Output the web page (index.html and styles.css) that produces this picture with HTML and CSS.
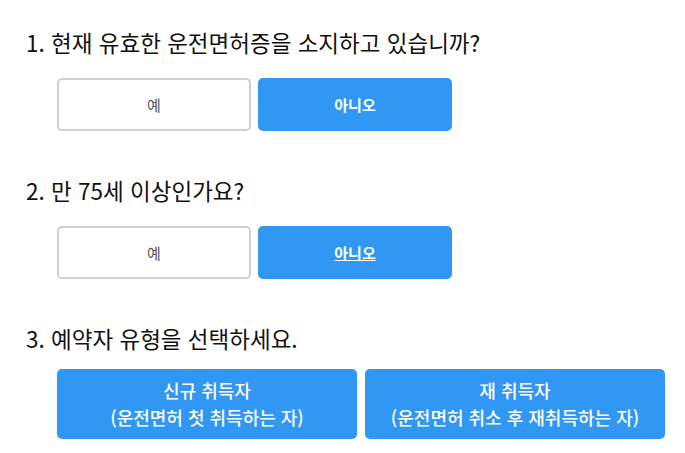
FILE: index.html
```html
<!DOCTYPE html>
<html lang="ko">
<head>
    <meta charset="UTF-8">
    <meta name="viewport" content="width=device-width, initial-scale=1.0">
    <title>예약 자격 확인</title>
    <link rel="stylesheet" href="styles.css">
</head>
<body>
    <div class="survey">
        <div class="question">
            <h2 class="question-title">1. 현재 유효한 운전면허증을 소지하고 있습니까?</h2>
            <div class="choice-row">
                <button class="choice-btn">예</button>
                <button class="choice-btn selected">아니오</button>
            </div>
        </div>

        <div class="question">
            <h2 class="question-title">2. 만 75세 이상인가요?</h2>
            <div class="choice-row">
                <button class="choice-btn">예</button>
                <button class="choice-btn selected focused">아니오</button>
            </div>
        </div>

        <div class="question">
            <h2 class="question-title tight">3. 예약자 유형을 선택하세요.</h2>
            <div class="type-row">
                <button class="type-btn">신규 취득자<br>(운전면허 첫 취득하는 자)</button>
                <button class="type-btn">재 취득자<br>(운전면허 취소 후 재취득하는 자)</button>
            </div>
        </div>
    </div>
</body>
</html>
```

FILE: styles.css
```css
* {
    margin: 0;
    padding: 0;
    box-sizing: border-box;
    font-family: 'Noto Sans CJK KR', 'Noto Sans', sans-serif;
}
body {
    background-color: #fff;
    color: #111;
}
.survey {
    padding: 27px 0 0 26px;
}
.question {
    margin-bottom: 44px;
}
.question:last-child {
    margin-bottom: 0;
}
.question-title {
    font-size: 22.5px;
    font-weight: 400;
    line-height: 30px;
    margin-bottom: 21px;
    color: #111;
}
.question-title.tight {
    margin-bottom: 16px;
}

/* 예 / 아니오 */
.choice-row {
    display: flex;
    gap: 7px;
    margin-left: 31px;
}
.choice-btn {
    width: 194px;
    height: 53px;
    border: 2px solid #cfcfcf;
    border-radius: 5px;
    background-color: #fff;
    color: #555;
    font-size: 15px;
    cursor: pointer;
}
.choice-btn.selected {
    background-color: #3197f4;
    border-color: #3197f4;
    color: #fff;
    font-weight: bold;
}
.choice-btn.focused {
    text-decoration: underline;
}

/* 예약자 유형 */
.type-row {
    display: flex;
    gap: 8px;
    margin-left: 31px;
}
.type-btn {
    width: 300px;
    height: 70px;
    border: none;
    border-radius: 5px;
    background-color: #3197f4;
    color: #fff;
    font-size: 18px;
    font-weight: 500;
    line-height: 27px;
    cursor: pointer;
}
```
